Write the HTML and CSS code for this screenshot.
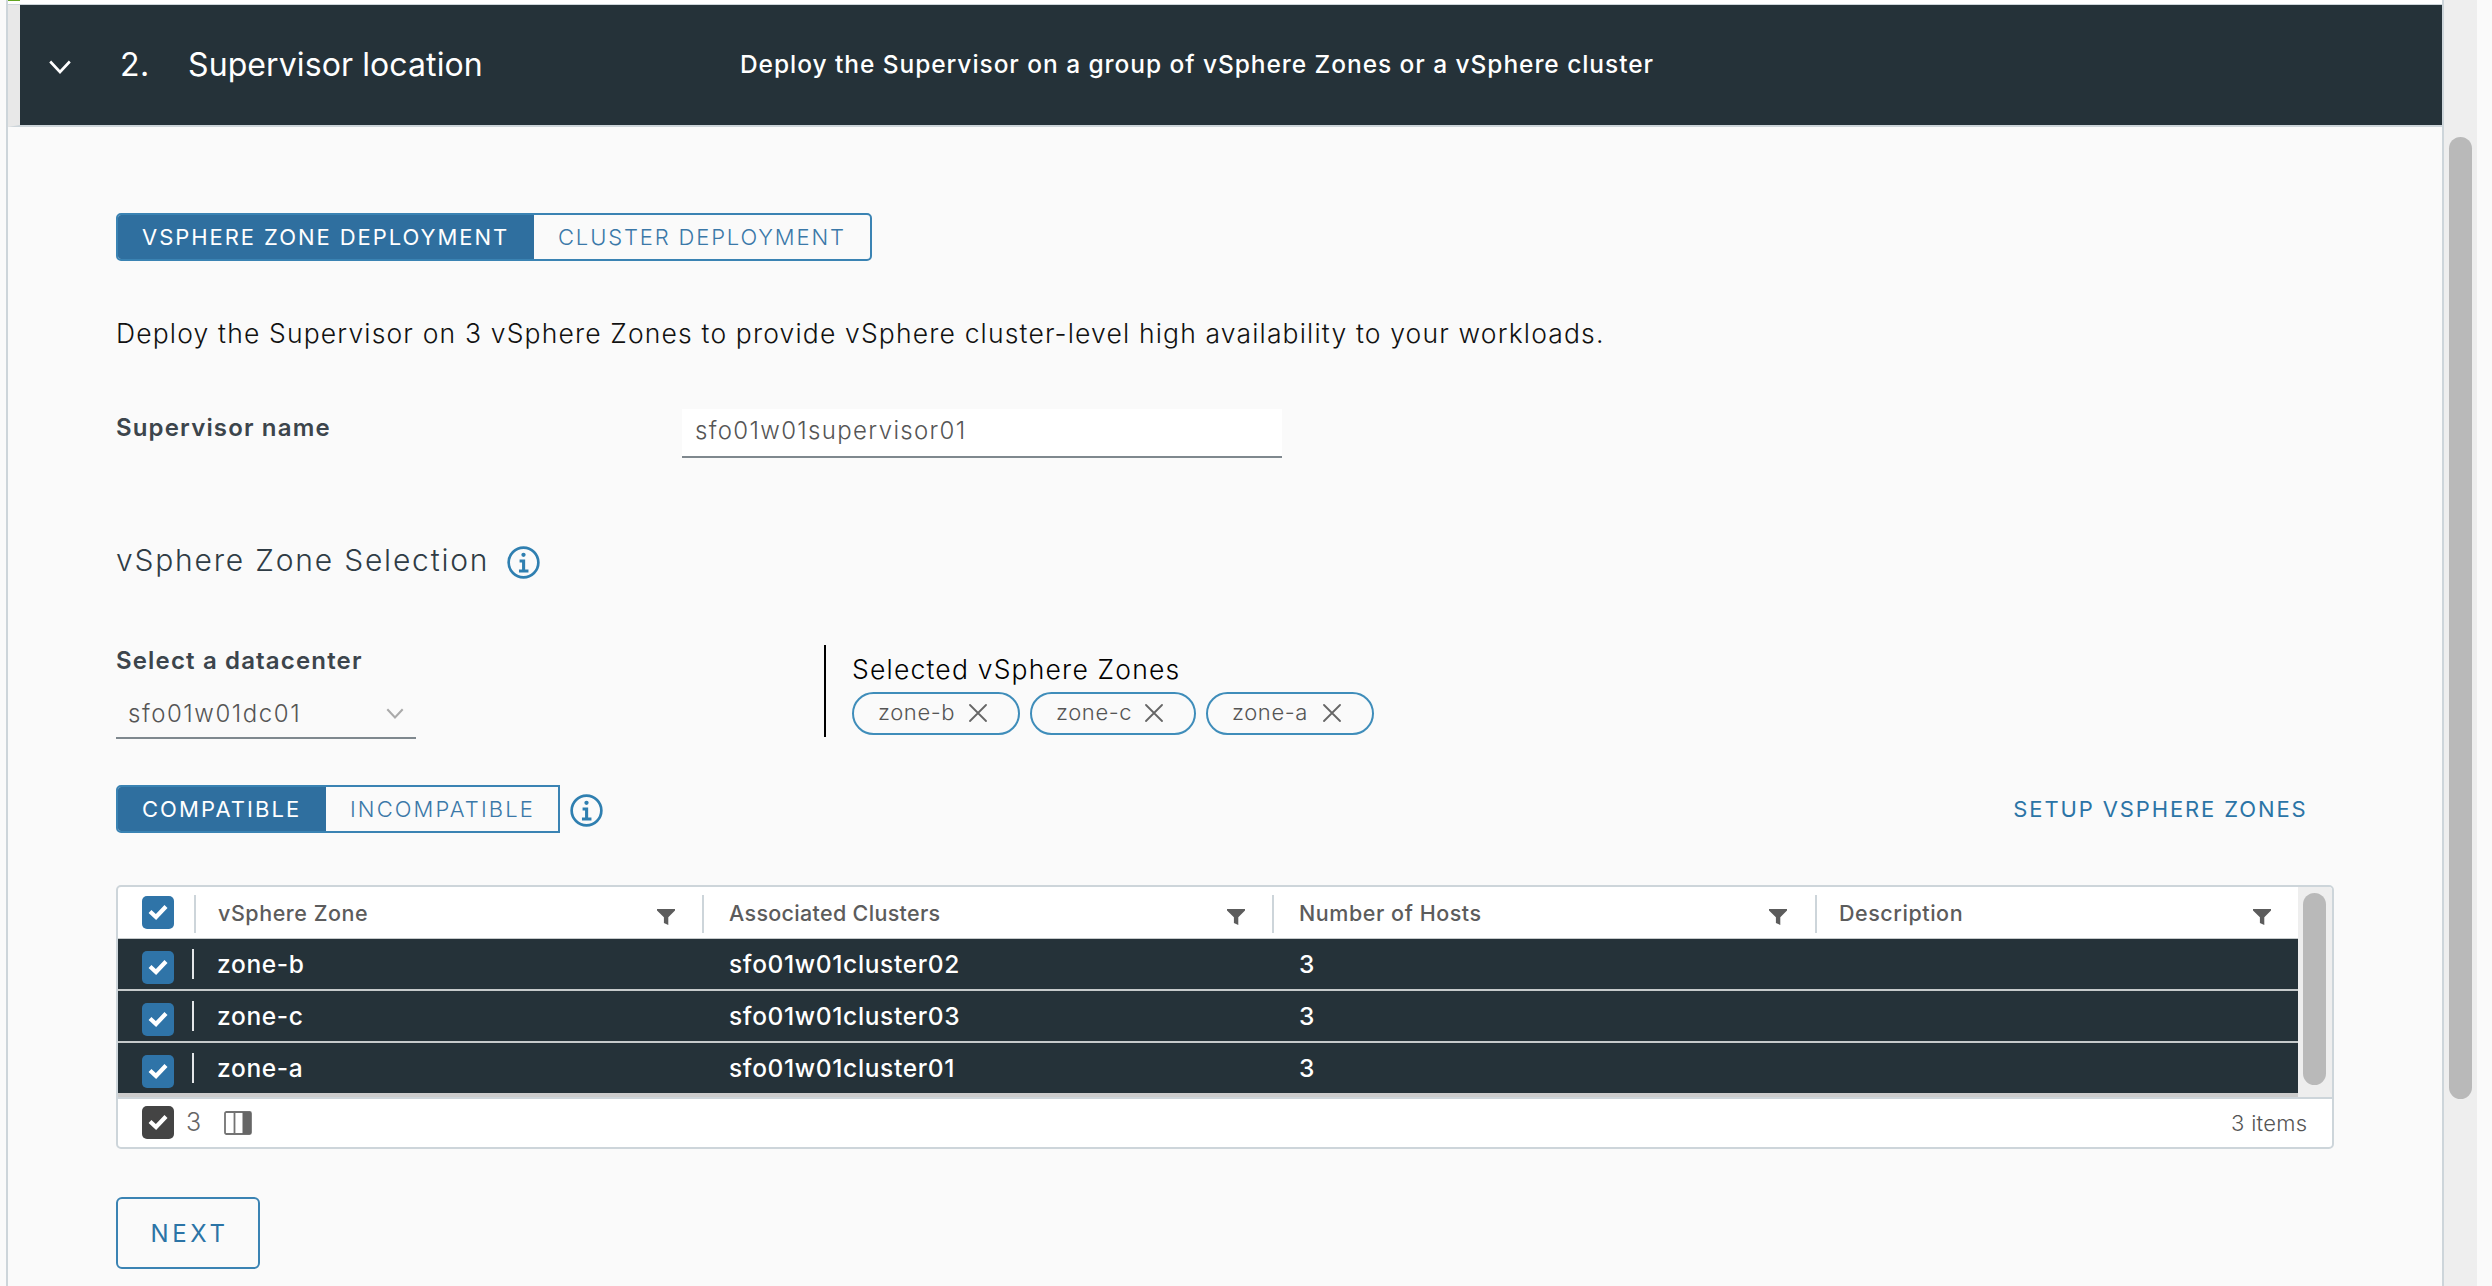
FILE: index.html
```
<!DOCTYPE html>
<html lang="en">
<head>
<meta charset="utf-8">
<title>Supervisor location</title>
<link rel="stylesheet" href="styles.css">
</head>
<body>
<svg width="0" height="0" class="defs">
  <symbol id="info" viewBox="0 0 32 32">
    <circle cx="16" cy="16" r="14.4" fill="none" stroke="currentColor" stroke-width="2.6"/>
    <circle cx="16" cy="8.6" r="2.1" fill="currentColor"/>
    <path d="M12.2 13.2H17.6V22.8H20.8V25.6H11.6V22.8H14.6V16H12.2Z" fill="currentColor"/>
  </symbol>
  <symbol id="filter" viewBox="0 0 18 16">
    <path d="M0 0H18V1.5L11.3 8.2V16L6.9 14V8.2L0 1.5Z" fill="currentColor"/>
  </symbol>
  <symbol id="close" viewBox="0 0 18 18">
    <path d="M1 1L17 17M17 1L1 17" fill="none" stroke="currentColor" stroke-width="1.8" stroke-linecap="round"/>
  </symbol>
  <symbol id="check" viewBox="0 0 32 32">
    <path d="M8 15L14 20.5L24 10" fill="none" stroke="#fff" stroke-width="4.2"/>
  </symbol>
  <symbol id="chevron" viewBox="0 0 22 14">
    <path d="M1.2 1.5L11 12L20.8 1.5" fill="none" stroke="currentColor" stroke-width="2.6"/>
  </symbol>
</svg>
<div class="shell">
  <main class="panel">
    <div class="previous"><span class="status"></span></div>
    <header class="step">
      <svg class="step-chevron"><use href="#chevron"/></svg>
      <span class="step-number">2.</span>
      <span class="step-title">Supervisor location</span>
      <span class="step-summary">Deploy the Supervisor on a group of vSphere Zones or a vSphere cluster</span>
    </header>
    <section class="body">
      <div class="segments mode">
        <span class="segment active">VSPHERE ZONE DEPLOYMENT</span>
        <span class="segment">CLUSTER DEPLOYMENT</span>
      </div>
      <p class="intro">Deploy the Supervisor on 3 vSphere Zones to provide vSphere cluster-level high availability to your workloads.</p>
      <div class="field">
        <span class="label">Supervisor name</span>
        <div class="input">sfo01w01supervisor01</div>
      </div>
      <h2 class="heading">vSphere Zone Selection <svg class="info"><use href="#info"/></svg></h2>
      <div class="selection">
        <div class="datacenter">
          <span class="label">Select a datacenter</span>
          <div class="select">sfo01w01dc01<svg class="select-chevron"><use href="#chevron"/></svg></div>
        </div>
        <div class="zones">
          <span class="zones-title">Selected vSphere Zones</span>
          <div class="chips">
            <span class="chip">zone-b<svg><use href="#close"/></svg></span>
            <span class="chip c">zone-c<svg><use href="#close"/></svg></span>
            <span class="chip">zone-a<svg><use href="#close"/></svg></span>
          </div>
        </div>
      </div>
      <div class="toolbar">
        <div class="segments compat">
          <span class="segment active">COMPATIBLE</span>
          <span class="segment">INCOMPATIBLE</span>
        </div>
        <svg class="info"><use href="#info"/></svg>
        <a class="setup">SETUP VSPHERE ZONES</a>
      </div>
      <div class="grid">
        <div class="grid-main">
          <div class="rows">
            <div class="row head">
              <span class="cell"><svg class="box"><use href="#check"/></svg></span>
              <span class="cell first">vSphere Zone<svg class="filter"><use href="#filter"/></svg></span>
              <span class="cell clusters">Associated Clusters<svg class="filter"><use href="#filter"/></svg></span>
              <span class="cell">Number of Hosts<svg class="filter"><use href="#filter"/></svg></span>
              <span class="cell last">Description<svg class="filter"><use href="#filter"/></svg></span>
            </div>
            <div class="row">
              <span class="cell"><svg class="box"><use href="#check"/></svg></span>
              <span class="cell">zone-b</span><span class="cell">sfo01w01cluster02</span><span class="cell">3</span><span class="cell"></span>
            </div>
            <div class="row">
              <span class="cell"><svg class="box"><use href="#check"/></svg></span>
              <span class="cell">zone-c</span><span class="cell">sfo01w01cluster03</span><span class="cell">3</span><span class="cell"></span>
            </div>
            <div class="row">
              <span class="cell"><svg class="box"><use href="#check"/></svg></span>
              <span class="cell">zone-a</span><span class="cell">sfo01w01cluster01</span><span class="cell">3</span><span class="cell"></span>
            </div>
          </div>
          <div class="track"><div class="thumb"></div></div>
        </div>
        <footer class="foot">
          <svg class="box dark"><use href="#check"/></svg>
          <span class="count">3</span>
          <svg class="columns" viewBox="0 0 28 24">
            <rect x="1" y="1" width="26" height="22" rx="1.5" fill="none" stroke="#737373" stroke-width="1.8"/>
            <path d="M10.5 1V23" stroke="#737373" stroke-width="1.8"/>
            <path d="M18.5 1H27V23H18.5Z" fill="#666"/>
          </svg>
          <span class="items">3 items</span>
        </footer>
      </div>
      <button class="next">NEXT</button>
    </section>
  </main>
  <div class="page-track"><div class="page-thumb"></div></div>
</div>
</body>
</html>
```
FILE: styles.css
```
* { box-sizing: border-box; }
body { margin: 0; background: #fafafa; font-family: Inter, "Open Sans", sans-serif; color: #21333b; overflow: hidden; }
svg { display: block; flex: none; }
.defs { display: none; }
.shell { display: flex; height: 1286px; padding-left: 6px; }
.panel { width: 2438px; border: solid #cdd5da; border-width: 0 2px; background: #fafafa; }

.previous { height: 5px; background: #fff; border-bottom: 1px solid #cdd5da; }
.status { display: block; width: 12px; height: 1px; background: #62a420; }

.step { display: flex; height: 122px; padding-left: 41px; background: #253239; color: #fff; border-left: 12px solid #e8e8e8; border-bottom: 2px solid #cdd5da; line-height: 40px; white-space: nowrap; }
.step-chevron { width: 22px; height: 14px; margin: 55px 0 0 -12px; }
.step-number { width: 67px; margin: 40px 0 0 49px; font-size: 32px; letter-spacing: .5px; }
.step-title { width: 552px; margin: 40px 0 0 1px; font-size: 32px; letter-spacing: .1px; }
.step-summary { margin-top: 39px; font-size: 24.5px; font-weight: 450; letter-spacing: .94px; }

.body { padding: 86px 108.5px 0 108px; }
.segments { display: flex; width: max-content; height: 48px; border: 2px solid #3a83b3; border-radius: 5px; overflow: hidden; font-size: 22px; line-height: 44px; font-weight: 300; color: #3a78a8; white-space: nowrap; }
.segment { padding-left: 24px; letter-spacing: 1.85px; }
.segment.active { background: #2f6f9f; color: #fff; font-weight: 400; letter-spacing: 1.95px; padding-left: 24px; }
.mode .active { width: 416px; }
.mode .segment:last-child { width: 336px; }
.compat { border-radius: 5px 0 0 5px; line-height: 44px; }
.compat .segment { letter-spacing: 2.1px; padding-left: 23px; }
.compat .active { width: 208px; letter-spacing: 2.05px; padding-left: 24px; }
.compat .segment:last-child { width: 232px; padding-left: 24px; }

.intro { margin: 54px 0 0; font-size: 26.5px; line-height: 36px; font-weight: 300; letter-spacing: 1.16px; color: #111; white-space: nowrap; }
.label { font-size: 24px; line-height: 36px; font-weight: 600; letter-spacing: 1.16px; color: #3c454c; }
.field { display: flex; margin-top: 58px; }
.field .label { width: 566px; padding-top: 1px; }
.input { width: 600px; height: 49px; padding: 4px 13px; background: #fff; border-bottom: 2px solid #7f888e; font-size: 24px; line-height: 36px; font-weight: 300; letter-spacing: 1.34px; color: #555; }
.heading { display: flex; margin: 82px 0 0; font-size: 30px; line-height: 40px; font-weight: 300; letter-spacing: 1.8px; color: #2f3c45; }
.info { width: 33px; height: 33px; color: #2f7fb0; }
.heading .info { margin: 6px 0 0 18px; }

.selection { display: flex; margin-top: 65px; height: 94px; }
.datacenter { width: 708px; }
.datacenter .label { display: block; line-height: 32px; }
.select { display: flex; justify-content: space-between; width: 300px; height: 44px; margin-top: 18px; padding: 0 12px; border-bottom: 2px solid #7f888e; font-size: 24px; line-height: 38px; font-weight: 300; letter-spacing: 1.55px; color: #555; }
.select-chevron { width: 18px; height: 11px; margin-top: 13px; color: #aaa; }
.zones { height: 92px; padding: 6px 0 0 26px; border-left: 2px solid #000; }
.zones-title { display: block; font-size: 26.5px; line-height: 36px; font-weight: 300; letter-spacing: 1.2px; color: #000; }
.chips { display: flex; gap: 10px; margin-top: 5px; }
.chip { display: flex; justify-content: space-between; width: 168px; height: 43px; padding: 0 31px 0 24px; border: 2px solid #3f8dba; border-radius: 22px; font-size: 22px; line-height: 36px; font-weight: 300; letter-spacing: .6px; color: #555; }
.chip.c { width: 166px; }
.chip svg { width: 18px; height: 18px; margin-top: 10px; color: #666; }

.toolbar { display: flex; height: 48px; margin-top: 46px; }
.toolbar .info { margin: 9px 0 0 10px; }
.setup { margin-left: auto; padding-right: 26px; font-size: 22px; line-height: 48px; letter-spacing: 1.88px; color: #2b74a6; }

.grid { height: 264px; margin-top: 52px; border: 2px solid #cdd5da; border-radius: 5px; background: #fff; overflow: hidden; }
.grid-main { display: flex; height: 212px; border-bottom: 2px solid #cdd5da; }
.rows { width: 2180px; background: #ccc; }
.row { display: grid; grid-template-columns: 74px 510px 570px 543px 1fr; height: 52px; background: #253239; color: #fff; border-bottom: 2px solid #c6cacb; font-size: 24.5px; font-weight: 500; line-height: 52px; letter-spacing: .65px; }
.row:last-child { height: 50px; border-bottom: 0; }
.cell { display: flex; padding-left: 27px; }
.cell:first-child { padding-left: 24px; }
.row:not(.head) .cell:nth-child(2) { padding-left: 25px; background: linear-gradient(#e3e6e8, #e3e6e8) 0 10px / 2px 30px no-repeat; }
.row .box { margin-top: 13px; }
.row.head { height: 52px; background: #fff; color: #5c5c5c; border-bottom: 1px solid #c6cacb; font-size: 21.5px; letter-spacing: .55px; }
.head .cell + .cell { justify-content: space-between; padding-right: 27px; background: linear-gradient(#cdd5da, #cdd5da) 0 8px / 2px 38px no-repeat; }
.head .cell:nth-child(2) { margin-left: 2px; padding-left: 24px; }
.head .clusters { letter-spacing: .32px; }
.head .cell:nth-child(4) { padding-right: 28px; }
.head .last { padding-left: 24px; }
.head .box { margin-top: 9px; }
.row:not(.head) { line-height: 50px; }
.row:not(.head) .box { margin-top: 12px; }
.filter { width: 18px; height: 16px; margin-top: 22px; color: #5c5c5c; }
.box { width: 32px; height: 33px; border-radius: 5px; background: #2f74a8; }
.box.dark { background: #444; }
.track { flex: 1; padding: 6px 5.5px; background: #eee; }
.thumb { width: 23px; height: 192px; border-radius: 12px; background: #b9b9b9; }
.foot { display: flex; height: 48px; padding: 0 24px; color: #666; }
.foot .box { margin-top: 7px; }
.count { width: 38px; margin-left: 12px; font-size: 25px; line-height: 47px; font-weight: 300; }
.columns { width: 28px; height: 24px; margin-top: 12px; }
.items { margin-left: auto; font-size: 22px; line-height: 48px; font-weight: 300; letter-spacing: .3px; color: #555; }

.next { display: block; width: 144px; height: 72px; margin: 47.5px 0 0; padding: 0 0 0 3px; border: 2px solid #3a83b3; border-radius: 6px; background: transparent; font: 400 24px/69px Inter, sans-serif; letter-spacing: 3.7px; color: #2b74a6; }
.page-track { width: 33px; padding: 137px 0 0 5px; background: #eee; }
.page-thumb { width: 23px; height: 962px; border-radius: 12px; background: #b9b9b9; }
```
